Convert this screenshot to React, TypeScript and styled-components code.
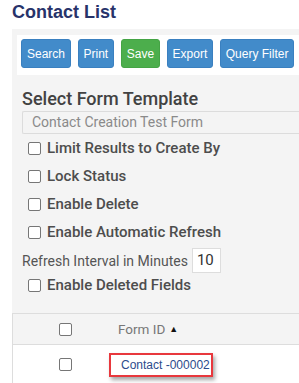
import React from 'react';
import styled, { createGlobalStyle } from 'styled-components';

const GlobalStyle = createGlobalStyle`
  body {
    margin: 0;
    background: #fff;
    font-family: Roboto, "Liberation Sans", sans-serif;
    overflow: hidden;
  }
`;

const buttons = [
  { label: 'Search', tone: 'blue' },
  { label: 'Print', tone: 'blue' },
  { label: 'Save', tone: 'green' },
  { label: 'Export', tone: 'blue' },
  { label: 'Query Filter', tone: 'blue' },
];

const options = ['Limit Results to Create By', 'Lock Status', 'Enable Delete', 'Enable Automatic Refresh'];

export default function App() {
  return (
    <Page>
      <GlobalStyle />
      <Title>Contact List</Title>
      <Panel>
        <Toolbar>
          {buttons.map((b) => (
            <Button key={b.label} $tone={b.tone}>
              {b.label}
            </Button>
          ))}
        </Toolbar>
        <FormSection>
          <Heading>Select Form Template</Heading>
          <SelectBox>Contact Creation Test Form</SelectBox>
          {options.map((o) => (
            <CheckRow key={o}>
              <Check type="checkbox" />
              <CheckLabel>{o}</CheckLabel>
            </CheckRow>
          ))}
          <RefreshRow>
            <RefreshLabel>Refresh Interval in Minutes</RefreshLabel>
            <NumberBox>10</NumberBox>
          </RefreshRow>
          <CheckRow>
            <Check type="checkbox" />
            <CheckLabel>Enable Deleted Fields</CheckLabel>
          </CheckRow>
        </FormSection>
        <Table>
          <HeaderRow>
            <CheckCell>
              <Check type="checkbox" />
            </CheckCell>
            <HeadCell>
              Form ID <SortArrow>▲</SortArrow>
            </HeadCell>
          </HeaderRow>
          <BodyRow>
            <CheckCell>
              <Check type="checkbox" />
            </CheckCell>
            <BodyCell>
              <Highlight>Contact -000002</Highlight>
            </BodyCell>
          </BodyRow>
        </Table>
      </Panel>
    </Page>
  );
}

const Page = styled.div`
  padding-left: 12px;
  width: 340px;
`;

const Title = styled.h1`
  margin: 0;
  font-family: "Liberation Sans", Arial, sans-serif;
  font-size: 18px;
  font-weight: 700;
  line-height: 24px;
  color: #27336a;
`;

const Panel = styled.div`
  margin-top: 5px;
  padding-top: 6px;
  background: #f4f4f4;
`;

const Toolbar = styled.div`
  display: flex;
  gap: 6.5px;
  margin-left: 5px;
  padding: 4px 4px 7px;
  background: #fff;
`;

const Button = styled.button<{ $tone: string }>`
  height: 29px;
  padding: 0 5px;
  border: 1px solid ${(p) => (p.$tone === 'green' ? '#45a445' : '#3a80c0')};
  border-radius: 3px;
  background: ${(p) => (p.$tone === 'green' ? '#4cae4c' : '#428bca')};
  color: #fff;
  font-family: "Liberation Sans", Arial, sans-serif;
  font-size: 12px;
  white-space: nowrap;
`;

const FormSection = styled.div`
  padding: 12px 0 0 10px;
`;

const Heading = styled.h2`
  margin: 0;
  font-size: 18px;
  font-weight: 500;
  line-height: 24px;
  color: #424242;
`;

const SelectBox = styled.div`
  height: 21px;
  padding-left: 9px;
  border: 1px solid #dcdcdc;
  border-right: none;
  border-radius: 2px 0 0 2px;
  font-size: 14px;
  line-height: 21px;
  color: #8a8a8a;
`;

const CheckRow = styled.label`
  display: flex;
  align-items: center;
  gap: 6px;
  height: 28px;
  padding-left: 6px;
`;

const Check = styled.input`
  appearance: none;
  width: 13px;
  height: 13px;
  margin: 0;
  border: 1px solid #767676;
  border-radius: 2px;
  background: #fff;
`;

const CheckLabel = styled.span`
  font-size: 15px;
  font-weight: 500;
  color: #4d4d4d;
`;

const RefreshRow = styled.div`
  display: flex;
  align-items: center;
  gap: 4px;
  margin: 2px 0 -2px;
`;

const RefreshLabel = styled.span`
  font-size: 14px;
  color: #555;
`;

const NumberBox = styled.div`
  box-sizing: border-box;
  width: 29px;
  height: 25px;
  padding-left: 4px;
  border: 1px solid #ddd;
  background: #fff;
  font-size: 15px;
  line-height: 23px;
  color: #333;
`;

const Table = styled.div`
  margin-top: 14px;
  border-left: 1px solid #ddd;
`;

const HeaderRow = styled.div`
  display: grid;
  grid-template-columns: 96px 1fr;
  height: 30px;
  border-top: 1px solid #ddd;
  border-bottom: 1px solid #ddd;
  background: #f4f4f4;
`;

const BodyRow = styled.div`
  display: grid;
  grid-template-columns: 96px 1fr;
  height: 39px;
  background: #fff;
`;

const CheckCell = styled.div`
  display: flex;
  align-items: center;
  justify-content: center;
  padding-left: 8px;
`;

const HeadCell = styled.div`
  display: flex;
  align-items: center;
  gap: 4px;
  padding-left: 9px;
  font-size: 13.5px;
  color: #777;
`;

const SortArrow = styled.span`
  font-size: 9px;
  color: #111;
`;

const BodyCell = styled.div`
  display: flex;
  align-items: center;
`;

const Highlight = styled.span`
  padding: 3px 1px 3px 10px;
  border: 2px solid #e8383d;
  box-shadow: 2px 3px 4px rgba(0, 0, 0, 0.35);
  font-family: "Liberation Sans", Arial, sans-serif;
  font-size: 12px;
  color: #2c4b8c;
`;
